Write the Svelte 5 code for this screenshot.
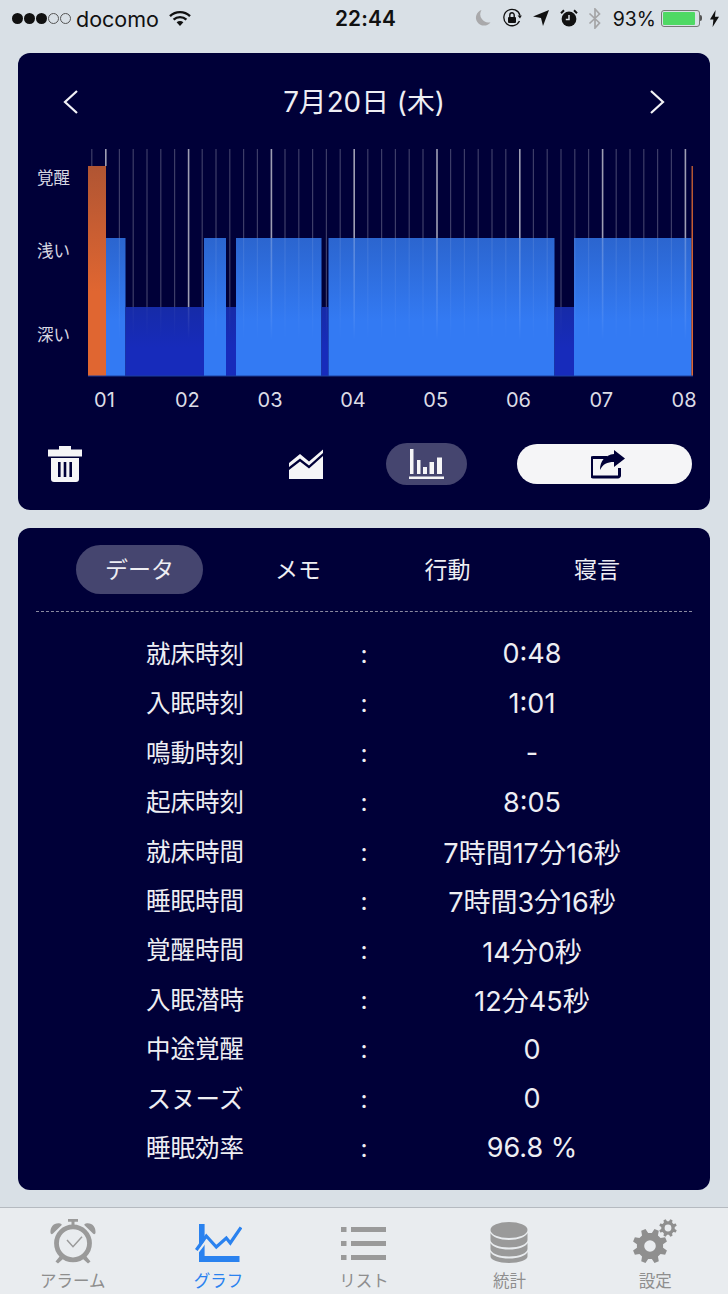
<script>
  const minors = Array.from({ length: 44 }, (_, i) => 91.2 + i * 13.8);
  const hours = ["01", "02", "03", "04", "05", "06", "07", "08"];

  // sleep stages, x0 -> x1 in chart coords
  const bars = [
    { x: 88, to: 106, kind: "awake" },
    { x: 106, to: 125.5, kind: "light" },
    { x: 125.5, to: 204, kind: "deep" },
    { x: 204, to: 226, kind: "light" },
    { x: 226, to: 236, kind: "deep" },
    { x: 236, to: 321.5, kind: "light" },
    { x: 321.5, to: 328.5, kind: "deep" },
    { x: 328.5, to: 554.5, kind: "light" },
    { x: 554.5, to: 574, kind: "deep" },
    { x: 574, to: 691.5, kind: "light" },
    { x: 691.5, to: 693, kind: "awake" },
  ];
  const tops = { awake: 166, light: 238, deep: 307 };

  // where a grid line at x runs into a bar
  function topAt(x) {
    const b = bars.find((b) => x >= b.x && x < b.to);
    return b ? tops[b.kind] : 376;
  }

  const rows = [
    ["就床時刻", "0:48"],
    ["入眠時刻", "1:01"],
    ["鳴動時刻", "-"],
    ["起床時刻", "8:05"],
    ["就床時間", "7時間17分16秒"],
    ["睡眠時間", "7時間3分16秒"],
    ["覚醒時間", "14分0秒"],
    ["入眠潜時", "12分45秒"],
    ["中途覚醒", "0"],
    ["スヌーズ", "0"],
    ["睡眠効率", "96.8 %"],
  ];
  const tabs = ["データ", "メモ", "行動", "寝言"];
  let activeTab = $state(0);

  // outline of a cog with a round hole, for the settings tab
  function gear(cx, cy, outer, inner, hole, teeth = 8) {
    const step = (Math.PI * 2) / teeth;
    const pt = (r, a) => `${(cx + r * Math.cos(a)).toFixed(2)} ${(cy + r * Math.sin(a)).toFixed(2)}`;
    let d = "";
    for (let i = 0; i < teeth; i++) {
      const a = i * step + step / 2;
      d += `${i ? "L" : "M"}${pt(inner, a - step * 0.32)}L${pt(outer, a - step * 0.17)}L${pt(outer, a + step * 0.17)}L${pt(inner, a + step * 0.32)}`;
    }
    d += `ZM${cx - hole} ${cy}a${hole} ${hole} 0 1 0 ${hole * 2} 0a${hole} ${hole} 0 1 0 ${-hole * 2} 0Z`;
    return d;
  }
</script>

<div class="page">
  <header class="status">
    <div class="left">
      <span class="dots"><i></i><i></i><i></i><i class="off"></i><i class="off"></i></span>
      <span class="carrier">docomo</span>
      <svg width="22" height="17" viewBox="0 0 22 17">
        <path d="M1 6.2C6.6.8 15.4.8 21 6.2" fill="none" stroke="#111" stroke-width="2.4" />
        <path d="M4.6 9.6c3.6-3.3 9.2-3.3 12.8 0" fill="none" stroke="#111" stroke-width="2.4" />
        <path d="M7.6 12.2c2-1.7 4.8-1.7 6.8 0L11 16z" fill="#111" />
      </svg>
    </div>
    <div class="time">22:44</div>
    <div class="right">
      <svg class="moon" width="16" height="18" viewBox="0 0 16 18"><path d="M6.5 1a8.2 8.2 0 0 0 9 12.2A8 8 0 1 1 6.5 1z" fill="#a9a9ab" /></svg>
      <svg class="lock" width="20" height="20" viewBox="0 0 20 20">
        <path d="M17.5 13A8.2 8.2 0 1 1 18 7.5" fill="none" stroke="#111" stroke-width="1.3" />
        <path d="M15.6 7.4l4.2.2-1.8 3z" fill="#111" />
        <rect x="6" y="9" width="8" height="6" rx="1" fill="#111" />
        <path d="M7.8 9V7a2.2 2.2 0 0 1 4.4 0v2" fill="none" stroke="#111" stroke-width="1.4" />
      </svg>
      <svg class="loc" width="16" height="16" viewBox="0 0 16 16"><path d="M16 0L10 16 8 8 0 6.5z" fill="#111" /></svg>
      <svg class="clock" width="18" height="18" viewBox="0 0 18 18">
        <circle cx="9" cy="10" r="7.4" fill="#111" />
        <path d="M1 4.2L4 1.2M17 4.2L14 1.2" stroke="#111" stroke-width="2" />
        <path d="M9 6v4.4H5.8" fill="none" stroke="#dfe4e9" stroke-width="1.5" />
      </svg>
      <svg class="bt" width="14" height="21" viewBox="0 0 14 21"><path d="M1.5 5.5l10 9.5L7 20V1l4.5 5-10 9.5" fill="none" stroke="#a4a4a6" stroke-width="1.7" /></svg>
      <span class="pct">93%</span>
      <span class="battery"><span class="fill"></span></span>
      <span class="nub"></span>
      <svg class="bolt" width="9" height="17" viewBox="0 0 9 17"><path d="M5.6 0L0 9.6h3.4L2.6 17 9 6.8H5z" fill="#111" /></svg>
    </div>
  </header>

  <section class="card top">
    <div class="date-row">
      <svg width="18" height="26" viewBox="0 0 18 26"><path d="M15 2L3 13l12 11" fill="none" stroke="#f2f2f6" stroke-width="2.2" /></svg>
      <h1>7月20日 (木)</h1>
      <svg width="18" height="26" viewBox="0 0 18 26"><path d="M3 2l12 11L3 24" fill="none" stroke="#f2f2f6" stroke-width="2.2" /></svg>
    </div>

    <svg class="chart" width="692" height="275" viewBox="18 140 692 275">
      <defs>
        <linearGradient id="g-light" x1="0" y1="238" x2="0" y2="376" gradientUnits="userSpaceOnUse">
          <stop offset="0" stop-color="#2b65cf" />
          <stop offset="0.6" stop-color="#337af3" />
        </linearGradient>
        <linearGradient id="g-deep" x1="0" y1="307" x2="0" y2="376" gradientUnits="userSpaceOnUse">
          <stop offset="0" stop-color="#162ba8" />
          <stop offset="0.6" stop-color="#172bbb" />
        </linearGradient>
        <linearGradient id="g-awake" x1="0" y1="166" x2="0" y2="376" gradientUnits="userSpaceOnUse">
          <stop offset="0" stop-color="#b05533" />
          <stop offset="0.6" stop-color="#e06631" />
        </linearGradient>
        <linearGradient id="g-fade" x1="0" y1="238" x2="0" y2="340" gradientUnits="userSpaceOnUse">
          <stop offset="0" stop-color="#fff" stop-opacity="0.4" />
          <stop offset="0.75" stop-color="#fff" stop-opacity="0.15" />
          <stop offset="1" stop-color="#fff" stop-opacity="0" />
        </linearGradient>
      </defs>

      {#each bars as b}
        <rect x={b.x} y={tops[b.kind]} width={b.to - b.x} height={376 - tops[b.kind]} fill="url(#g-{b.kind})" />
      {/each}
      <rect x="88" y="375.500" width="605" height="1" fill="#1d3f9c" />

      {#each minors as x, i}
        {@const major = i % 6 === 1}
        {@const top = topAt(x)}
        <g opacity={major ? 0.62 : 0.24}>
          <rect {x} y="149" width={major ? 1.6 : 1.2} height={top - 149} fill="#fff" />
          {#if top < 340 && top > 166}
            <rect {x} y={top} width={major ? 1.6 : 1.2} height={340 - top} fill="url(#g-fade)" />
          {/if}
        </g>
      {/each}

      <text x="53.5" y="183.500" class="axis-y">覚醒</text>
      <text x="53.5" y="257" class="axis-y">浅い</text>
      <text x="53.5" y="340.500" class="axis-y">深い</text>

      {#each hours as h, i}
        <text x={104.5 + i * 82.8} y="407" class="axis-x">{h}</text>
      {/each}
    </svg>

    <div class="tools">
      <svg class="trash" width="36" height="38" viewBox="0 0 36 38" fill="#f5f5f7">
        <path d="M12 1h12v3.500h11v7H1v-7h11z" />
        <path d="M4 13h28v21a3 3 0 0 1-3 3H7a3 3 0 0 1-3-3z" />
        <path d="M11 17h2.600v15H11zM16.700 17h2.600v15h-2.600zM22.400 17H25v15h-2.600z" fill="#000038" />
      </svg>
      <svg class="area" width="36" height="32" viewBox="0 0 36 32" fill="#f5f5f7">
        <path d="M1 18L12 9.500l9 7L35 4v-3.500L21 12.500l-9-7.500L1 14z" transform="translate(0 1)" />
        <path d="M1 22l11-8.500 9 7L35 8v23H1z" />
      </svg>
      <div class="pill">
        <svg width="36" height="32" viewBox="0 0 36 32" fill="#f5f5f7">
          <path d="M1 1h3.500v25H1zM8 12h3.500v14H8zM14 19h4v7h-4zM20.500 14H25v12h-4.500zM28 9.500h5V26h-5z" />
          <path d="M0 28.500h35v2.500H0z" />
        </svg>
      </div>
      <div class="share">
        <svg width="36" height="30" viewBox="0 0 36 30">
          <path d="M16 8.500H2a1.500 1.500 0 0 0-1.500 1.500v16.500A1.500 1.500 0 0 0 2 28h25a1.500 1.500 0 0 0 1.500-1.500V19" fill="none" stroke="#000038" stroke-width="3" />
          <path d="M23 1l11 8.500L23 18v-5c-7 0-11 2-14 8 0-9 5-15 14-16z" fill="#000038" />
        </svg>
      </div>
    </div>
  </section>

  <section class="card data">
    <div class="seg">
      {#each tabs as t, i}
        <button class:on={activeTab === i} onclick={() => (activeTab = i)}>{t}</button>
      {/each}
    </div>
    <div class="rule"></div>
    {#each rows as [label, value]}
      <div class="row">
        <span class="key">{label}</span>
        <span class="colon">:</span>
        <span class="val">{value}</span>
      </div>
    {/each}
  </section>

  <nav class="tabbar">
    <div class="tab">
      <svg width="48" height="48" viewBox="0 0 48 48" fill="#9a9a9a">
        <circle cx="24" cy="24.300" r="16.500" fill="none" stroke="#9a9a9a" stroke-width="4.800" />
        <path d="M1.500 14C1 8 5 3.500 11 4.500c1.500.3 2 1 1.500 1.800L4 14.500c-1 1-2.200.8-2.500-.5z" />
        <path d="M46.500 14C47 8 43 3.500 37 4.500c-1.500.3-2 1-1.500 1.800L44 14.500c1 1 2.200.8 2.500-.5z" />
        <path d="M19 0h10v2.800h-3.500v4h-3v-4H19z" />
        <path d="M11 37l-4.500 5.500 2.500 2 5-4.500zM37 37l4.500 5.500-2.500 2-5-4.500z" />
        <path d="M18 21l6 6.700 9-10" fill="none" stroke="#9a9a9a" stroke-width="1.500" />
      </svg>
      <span>アラーム</span>
    </div>
    <div class="tab active">
      <svg width="48" height="48" viewBox="0 0 48 48" fill="#2a82ef">
        <path d="M5 5h5.600v38H5zM5 37h40.500v6H5z" />
        <path d="M1 36.500L12 22" fill="none" stroke="#e9ecef" stroke-width="2.600" />
        <path d="M2.300 31L12.300 17l10 11 10-9 4 5L47 8.300" fill="none" stroke="#2a82ef" stroke-width="3.200" />
      </svg>
      <span>グラフ</span>
    </div>
    <div class="tab">
      <svg width="48" height="48" viewBox="0 0 48 48" fill="#9a9a9a">
        <path d="M1 8h5.500v5H1zM11 8h35v5H11zM1 22h5.500v5H1zM11 22h35v5H11zM1 36h5.500v5H1zM11 36h35v5H11z" />
      </svg>
      <span>リスト</span>
    </div>
    <div class="tab">
      <svg width="48" height="48" viewBox="0 0 48 48" fill="#9a9a9a">
        <ellipse cx="23" cy="11" rx="18.500" ry="8" />
        <path d="M4.500 14c2 4 9 7 18.500 7s16.500-3 18.500-7v7c0 4-8 7.500-18.500 7.500S4.500 25 4.500 21z" />
        <path d="M4.500 24c2 4 9 6.500 18.500 6.500S39.500 28 41.500 24v6c0 4-8 7.500-18.500 7.500S4.500 34 4.500 30z" />
        <path d="M4.500 33c2 4 9 6.500 18.500 6.500S39.500 37 41.500 33v4.500c0 3.500-8 6.500-18.500 6.500S4.500 41 4.500 37.500z" />
      </svg>
      <span>統計</span>
    </div>
    <div class="tab">
      <svg width="48" height="48" viewBox="0 0 48 48" fill="#8f8f8f">
        <path fill-rule="evenodd" d={gear(19, 27, 17.5, 13.2, 5.8)} />
        <path fill-rule="evenodd" d={gear(37, 9, 9, 6.8, 3.4)} />
      </svg>
      <span>設定</span>
    </div>
  </nav>
</div>

<style>
  :global(body) {
    margin: 0;
    background: #d9e0e6;
  }

  .page {
    width: 728px;
    height: 1294px;
    display: flex;
    flex-direction: column;
    overflow: hidden;
    background: #d9e0e6;
    font-family: Inter, "Noto Sans CJK JP", sans-serif;
  }

  .status {
    height: 36px;
    margin-bottom: 17px;
    padding: 0 9px 0 12px;
    display: grid;
    grid-template-columns: 1fr auto 1fr;
    align-items: center;
    color: #111;
    font-size: 21px;
  }

  .left,
  .right {
    display: flex;
    align-items: center;
  }

  .right {
    justify-content: flex-end;
  }

  .dots {
    display: flex;
    gap: 1px;
    margin-right: 5px;
  }

  .dots i {
    width: 11px;
    height: 11px;
    border-radius: 50%;
    background: #111;
    box-sizing: border-box;
  }

  .dots i.off {
    background: none;
    border: 1px solid #555;
  }

  .carrier {
    margin-right: 10px;
    padding-top: 1px;
    font-size: 21.5px;
  }

  .time {
    padding-top: 1px;
    font-weight: 600;
    font-size: 20.800px;
    letter-spacing: 0.2px;
  }

  .moon,
  .lock,
  .loc,
  .bt {
    margin-right: 11px;
  }

  .clock {
    margin-right: 10px;
  }

  .pct {
    padding-top: 1px;
    font-size: 19.500px;
    margin-right: 5px;
  }

  .battery {
    width: 39px;
    height: 17px;
    box-sizing: border-box;
    border: 1px solid #777;
    border-radius: 3px;
    padding: 1px;
    display: block;
  }

  .fill {
    display: block;
    width: 92%;
    height: 100%;
    background: #4fd964;
    border-radius: 1px;
  }

  .nub {
    width: 2px;
    height: 6px;
    background: #555;
    border-radius: 0 2px 2px 0;
    margin-right: 8px;
  }

  .card {
    margin: 0 18px;
    background: #000038;
    border-radius: 12px;
    color: #eeeef3;
  }

  .top {
    height: 457px;
    margin-bottom: 18px;
    display: flex;
    flex-direction: column;
  }

  .date-row {
    height: 76px;
    padding: 11px 44px 0;
    display: flex;
    align-items: center;
    justify-content: space-between;
  }

  h1 {
    margin: 0 0 4px;
    font-weight: 400;
    font-size: 27.800px;
  }

  .chart {
    display: block;
  }

  .axis-y {
    fill: #d8d8e2;
    font-size: 16.500px;
    text-anchor: middle;
  }

  .axis-x {
    fill: #dcdce6;
    font-size: 20px;
    text-anchor: middle;
  }

  .tools {
    display: flex;
    align-items: center;
    padding: 28px 18px 0 29px;
    height: 42px;
  }

  .area {
    margin-left: 205px;
  }

  .pill {
    width: 81px;
    height: 42px;
    margin-left: 62px;
    border-radius: 21px;
    background: #45456f;
    display: flex;
    align-items: center;
    justify-content: center;
  }

  .share {
    width: 175px;
    height: 40px;
    box-sizing: border-box;
    padding-left: 9px;
    margin-left: 50px;
    border-radius: 20px;
    background: #f5f5f7;
    display: flex;
    align-items: center;
    justify-content: center;
  }

  .data {
    height: 662px;
    box-sizing: border-box;
    padding-top: 17px;
    margin-bottom: 17px;
  }

  .seg {
    display: flex;
    gap: 22.500px;
    padding-left: 58px;
  }

  .seg button {
    width: 127px;
    height: 49px;
    padding: 0 0 4px;
    border: none;
    border-radius: 25px;
    background: none;
    color: inherit;
    font: inherit;
    font-size: 23px;
    cursor: pointer;
  }

  .seg button:first-child {
    margin-right: 9px;
  }

  .seg button.on {
    background: #45456f;
  }

  .rule {
    margin: 17px 18px 17.300px;
    border-top: 1px dashed #8a8aa0;
  }

  .row {
    height: 49.400px;
    padding-left: 64px;
    display: grid;
    grid-template-columns: 226px 112px 224px;
    align-items: center;
    text-align: center;
    font-size: 24.500px;
  }

  .key {
    padding-bottom: 3px;
  }

  .val {
    font-size: 27px;
  }

  .tabbar {
    flex: 1;
    display: grid;
    grid-template-columns: repeat(5, 1fr);
    background: #e9ecef;
    border-top: 1px solid #b5bac0;
  }

  .tab {
    display: flex;
    flex-direction: column;
    align-items: center;
    padding-top: 11px;
    color: #8e8e8e;
    font-size: 16.500px;
    line-height: 24px;
  }

  .tab svg {
    display: block;
    margin-bottom: 2px;
  }

  .tab.active {
    color: #2a82ef;
  }
</style>
